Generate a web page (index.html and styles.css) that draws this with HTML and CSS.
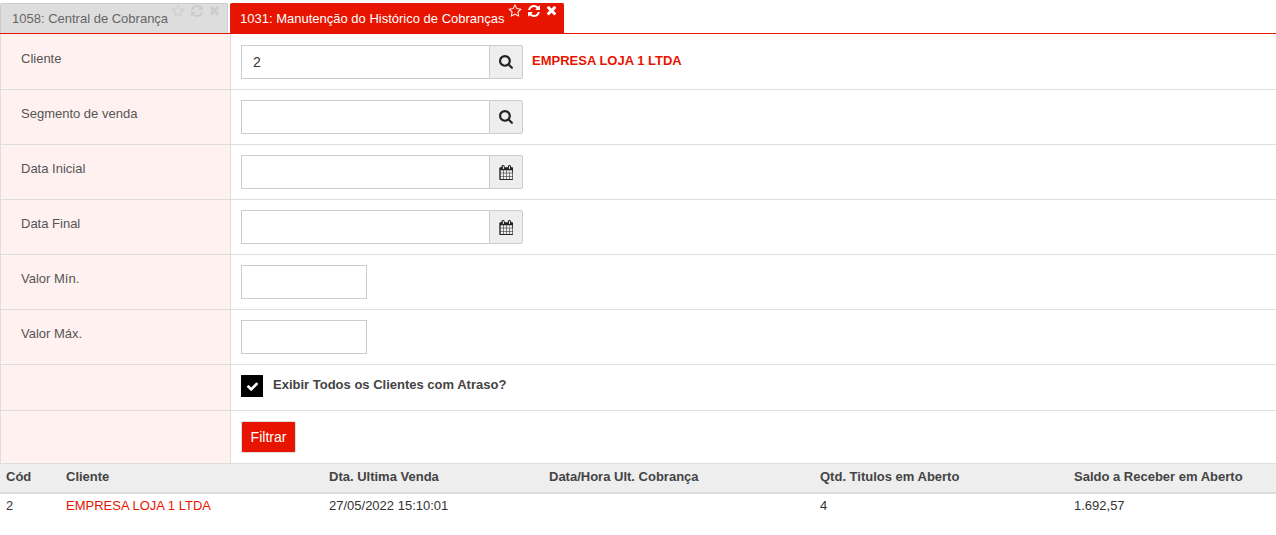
FILE: index.html
```html
<!DOCTYPE html>
<html lang="pt-BR">
<head>
    <meta charset="UTF-8">
    <title>Manutenção do Histórico de Cobranças</title>
    <link rel="stylesheet" href="styles.css">
</head>
<body>
    <svg class="defs" width="0" height="0">
        <symbol id="i-star" viewBox="0 0 1792 1792"><path d="M1201 1004l306-297-422-62-189-382-189 382-422 62 306 297-73 421 378-199 377 199zm527-357q0 22-26 48l-363 354 86 500q1 7 1 20 0 50-41 50-19 0-40-12l-449-236-449 236q-22 12-40 12-21 0-31.5-14.5t-10.5-35.5q0-6 2-20l86-500-364-354q-25-27-25-48 0-37 56-46l502-73 225-455q19-41 49-41t49 41l225 455 502 73q56 9 56 46z"/></symbol>
        <symbol id="i-refresh" viewBox="0 0 1792 1792"><path d="M1639 1056q0 5-1 7-64 268-268 434.5t-478 166.5q-146 0-282.5-55t-243.5-157l-129 129q-19 19-45 19t-45-19-19-45v-448q0-26 19-45t45-19h448q26 0 45 19t19 45-19 45l-137 137q71 66 161 102t187 36q134 0 250-65t186-179q11-17 53-117 8-23 30-23h192q13 0 22.5 9.5t9.5 22.5zm25-800v448q0 26-19 45t-45 19h-448q-26 0-45-19t-19-45 19-45l138-138q-148-137-349-137-134 0-250 65t-186 179q-11 17-53 117-8 23-30 23h-199q-13 0-22.5-9.5t-9.5-22.5v-7q65-268 270-434.5t480-166.5q146 0 284 55.5t245 156.5l130-129q19-19 45-19t45 19 19 45z"/></symbol>
        <symbol id="i-times" viewBox="0 0 1408 1792"><path d="M1298 1214q0 40-28 68l-136 136q-28 28-68 28t-68-28l-294-294-294 294q-28 28-68 28t-68-28l-136-136q-28-28-28-68t28-68l294-294-294-294q-28-28-28-68t28-68l136-136q28-28 68-28t68 28l294 294 294-294q28-28 68-28t68 28l136 136q28 28 28 68t-28 68l-294 294 294 294q28 28 28 68z"/></symbol>
        <symbol id="i-search" viewBox="0 0 1664 1792"><path d="M1152 704q0-185-131.5-316.5t-316.5-131.5-316.5 131.5-131.5 316.5 131.5 316.5 316.5 131.5 316.5-131.5 131.5-316.5zm512 832q0 52-38 90t-90 38q-54 0-90-38l-343-342q-179 124-399 124-143 0-273.5-55.5t-225-150-150-225-55.5-273.5 55.5-273.5 150-225 225-150 273.5-55.5 273.5 55.5 225 150 150 225 55.5 273.5q0 220-124 399l343 343q37 37 37 90z"/></symbol>
        <symbol id="i-calendar" viewBox="0 0 1664 1792"><path d="M192 1664h288v-288h-288v288zm352 0h320v-288h-320v288zm-352-352h288v-320h-288v320zm352 0h320v-320h-320v320zm-352-384h288v-288h-288v288zm736 736h320v-288h-320v288zm-384-736h320v-288h-320v288zm768 736h288v-288h-288v288zm-384-352h320v-320h-320v320zm-352-864v-288q0-13-9.5-22.5t-22.5-9.5h-64q-13 0-22.5 9.5t-9.5 22.5v288q0 13 9.5 22.5t22.5 9.5h64q13 0 22.5-9.5t9.5-22.5zm736 864h288v-320h-288v320zm-384-384h320v-288h-320v288zm352 0h288v-288h-288v288zm32-480v-288q0-13-9.5-22.5t-22.5-9.5h-64q-13 0-22.5 9.5t-9.5 22.5v288q0 13 9.5 22.5t22.5 9.5h64q13 0 22.5-9.5t9.5-22.5zm384-64v1280q0 52-38 90t-90 38h-1408q-52 0-90-38t-38-90v-1280q0-52 38-90t90-38h128v-96q0-66 47-113t113-47h64q66 0 113 47t47 113v96h384v-96q0-66 47-113t113-47h64q66 0 113 47t47 113v96h128q52 0 90 38t38 90z"/></symbol>
        <symbol id="i-check" viewBox="0 0 1792 1792"><path d="M1671 566q0 40-28 68l-724 724-136 136q-28 28-68 28t-68-28l-136-136-362-362q-28-28-28-68t28-68l136-136q28-28 68-28t68 28l294 295 656-657q28-28 68-28t68 28l136 136q28 28 28 68z"/></symbol>
    </svg>

    <!-- Abas -->
    <div class="tabs">
        <div class="tab">
            <span class="tab-title">1058: Central de Cobrança</span>
            <span class="tab-icons">
                <svg class="ic-star"><use href="#i-star"/></svg>
                <svg class="ic-refresh"><use href="#i-refresh"/></svg>
                <svg class="ic-times"><use href="#i-times"/></svg>
            </span>
        </div>
        <div class="tab tab-active">
            <span class="tab-title">1031: Manutenção do Histórico de Cobranças</span>
            <span class="tab-icons">
                <svg class="ic-star"><use href="#i-star"/></svg>
                <svg class="ic-refresh"><use href="#i-refresh"/></svg>
                <svg class="ic-times"><use href="#i-times"/></svg>
            </span>
        </div>
    </div>

    <!-- Filtros -->
    <div class="form">
        <div class="row row-first">
            <div class="row-label">Cliente</div>
            <div class="row-field">
                <input class="input input-group-field" type="text" value="2">
                <button class="addon"><svg class="ic-addon"><use href="#i-search"/></svg></button>
                <span class="client-name">EMPRESA LOJA 1 LTDA</span>
            </div>
        </div>
        <div class="row">
            <div class="row-label">Segmento de venda</div>
            <div class="row-field">
                <input class="input input-group-field" type="text">
                <button class="addon"><svg class="ic-addon"><use href="#i-search"/></svg></button>
            </div>
        </div>
        <div class="row">
            <div class="row-label">Data Inicial</div>
            <div class="row-field">
                <input class="input input-group-field" type="text">
                <button class="addon"><svg class="ic-addon"><use href="#i-calendar"/></svg></button>
            </div>
        </div>
        <div class="row">
            <div class="row-label">Data Final</div>
            <div class="row-field">
                <input class="input input-group-field" type="text">
                <button class="addon"><svg class="ic-addon"><use href="#i-calendar"/></svg></button>
            </div>
        </div>
        <div class="row">
            <div class="row-label">Valor Mín.</div>
            <div class="row-field">
                <input class="input input-small" type="text">
            </div>
        </div>
        <div class="row">
            <div class="row-label">Valor Máx.</div>
            <div class="row-field">
                <input class="input input-small" type="text">
            </div>
        </div>
        <div class="row row-check">
            <div class="row-label"></div>
            <div class="row-field">
                <span class="checkbox"><svg class="ic-check"><use href="#i-check"/></svg></span>
                <span class="check-label">Exibir Todos os Clientes com Atraso?</span>
            </div>
        </div>
        <div class="row row-submit">
            <div class="row-label"></div>
            <div class="row-field">
                <button class="btn-filter">Filtrar</button>
            </div>
        </div>
    </div>

    <!-- Resultado -->
    <table class="grid">
        <colgroup>
            <col class="col-cod">
            <col class="col-client">
            <col class="col-sale">
            <col class="col-charge">
            <col class="col-qty">
            <col>
        </colgroup>
        <thead>
            <tr>
                <th>Cód</th>
                <th>Cliente</th>
                <th>Dta. Ultima Venda</th>
                <th>Data/Hora Ult. Cobrança</th>
                <th>Qtd. Titulos em Aberto</th>
                <th>Saldo a Receber em Aberto</th>
            </tr>
        </thead>
        <tbody>
            <tr>
                <td>2</td>
                <td class="link-red">EMPRESA LOJA 1 LTDA</td>
                <td>27/05/2022 15:10:01</td>
                <td></td>
                <td>4</td>
                <td>1.692,57</td>
            </tr>
        </tbody>
    </table>
</body>
</html>
```

FILE: styles.css
```css
html, body {
    height: 100%;
}

body {
    margin: 0;
    padding: 0;
    overflow: hidden;
    font-family: "Liberation Sans", Arial, sans-serif;
    font-size: 13px;
    color: #333;
    background-color: #fff;
}

.defs {
    position: absolute;
}

/* Abas */
.tabs {
    display: flex;
    gap: 2px;
    height: 34px;
    padding-top: 3px;
    box-sizing: border-box;
    border-bottom: 1px solid #e71500;
}

.tab {
    display: flex;
    width: 228px;
    box-sizing: border-box;
    height: 30px;
    padding-left: 11px;
    background-color: #ddd;
    border: 1px solid #ccc;
    border-bottom: none;
    border-radius: 2px 2px 0 0;
    color: #666;
}

.tab-title {
    line-height: 29px;
    white-space: nowrap;
}

.tab-icons {
    display: flex;
    gap: 5px;
    margin-left: 3px;
    color: #ccc;
}

.tab-icons svg {
    width: 14px;
    height: 14px;
    fill: currentColor;
}

.tab-icons .ic-times {
    width: 11px;
}

.tab-active {
    width: 334px;
    padding-left: 9px;
    background-color: #e71500;
    border-color: #e71500;
    color: #fff;
}

.tab-active .tab-icons {
    color: #fff;
}

/* Filtros */
.row {
    display: flex;
    height: 55px;
    box-sizing: border-box;
    border-bottom: 1px solid #ddd;
}

.row-first {
    height: 56px;
}

.row-check {
    height: 46px;
}

.row-submit {
    height: 52px;
    border-bottom: none;
}

.row-label {
    width: 231px;
    flex-shrink: 0;
    box-sizing: border-box;
    padding: 16px 0 0 20px;
    background-color: #fff1f0;
    border-left: 1px solid #ddd;
    border-right: 1px solid #ddd;
    color: #555;
    line-height: 16px;
}

.row-first .row-label {
    padding-top: 17px;
}

.row-field {
    display: flex;
    align-items: flex-start;
    padding: 10px 0 0 10px;
}

.row-first .row-field {
    padding-top: 11px;
}

.input {
    box-sizing: border-box;
    height: 34px;
    margin: 0;
    padding: 0 11px;
    border: 1px solid #ccc;
    font-family: inherit;
    font-size: 14px;
    color: #333;
    outline: none;
}

.input-group-field {
    width: 248px;
    border-right: none;
}

.input-small {
    width: 126px;
}

.addon {
    display: flex;
    align-items: center;
    justify-content: center;
    box-sizing: border-box;
    width: 34px;
    height: 34px;
    padding: 0;
    background-color: #eee;
    border: 1px solid #ccc;
    border-radius: 0 2px 2px 0;
}

.ic-addon {
    width: 14px;
    height: 15px;
    fill: #222;
}

.client-name {
    margin-left: 9px;
    line-height: 32px;
    font-weight: bold;
    color: #e71500;
}

.checkbox {
    display: flex;
    align-items: center;
    justify-content: center;
    width: 22px;
    height: 22px;
    background-color: #000;
}

.ic-check {
    width: 13px;
    height: 13px;
    fill: #fff;
}

.check-label {
    margin-left: 10px;
    line-height: 20px;
    font-weight: bold;
    color: #444;
}

.btn-filter {
    box-sizing: border-box;
    width: 55px;
    height: 32px;
    padding: 0;
    background-color: #e71500;
    border: 1px solid #ddd;
    border-radius: 2px;
    font-family: inherit;
    font-size: 14px;
    color: #fff;
}

/* Resultado */
.grid {
    width: 100%;
    border-collapse: collapse;
    table-layout: fixed;
}

.col-cod {
    width: 60px;
}

.col-client {
    width: 263px;
}

.col-sale {
    width: 220px;
}

.col-charge {
    width: 271px;
}

.col-qty {
    width: 254px;
}

.grid th {
    height: 25px;
    padding: 0 6px 3px;
    background-color: #eee;
    border-top: 1px solid #ddd;
    border-bottom: 2px solid #ddd;
    text-align: left;
    font-weight: bold;
    color: #444;
}

.grid td {
    height: 23px;
    padding: 0 6px;
    color: #333;
}

.grid .link-red {
    color: #e71500;
}
```
